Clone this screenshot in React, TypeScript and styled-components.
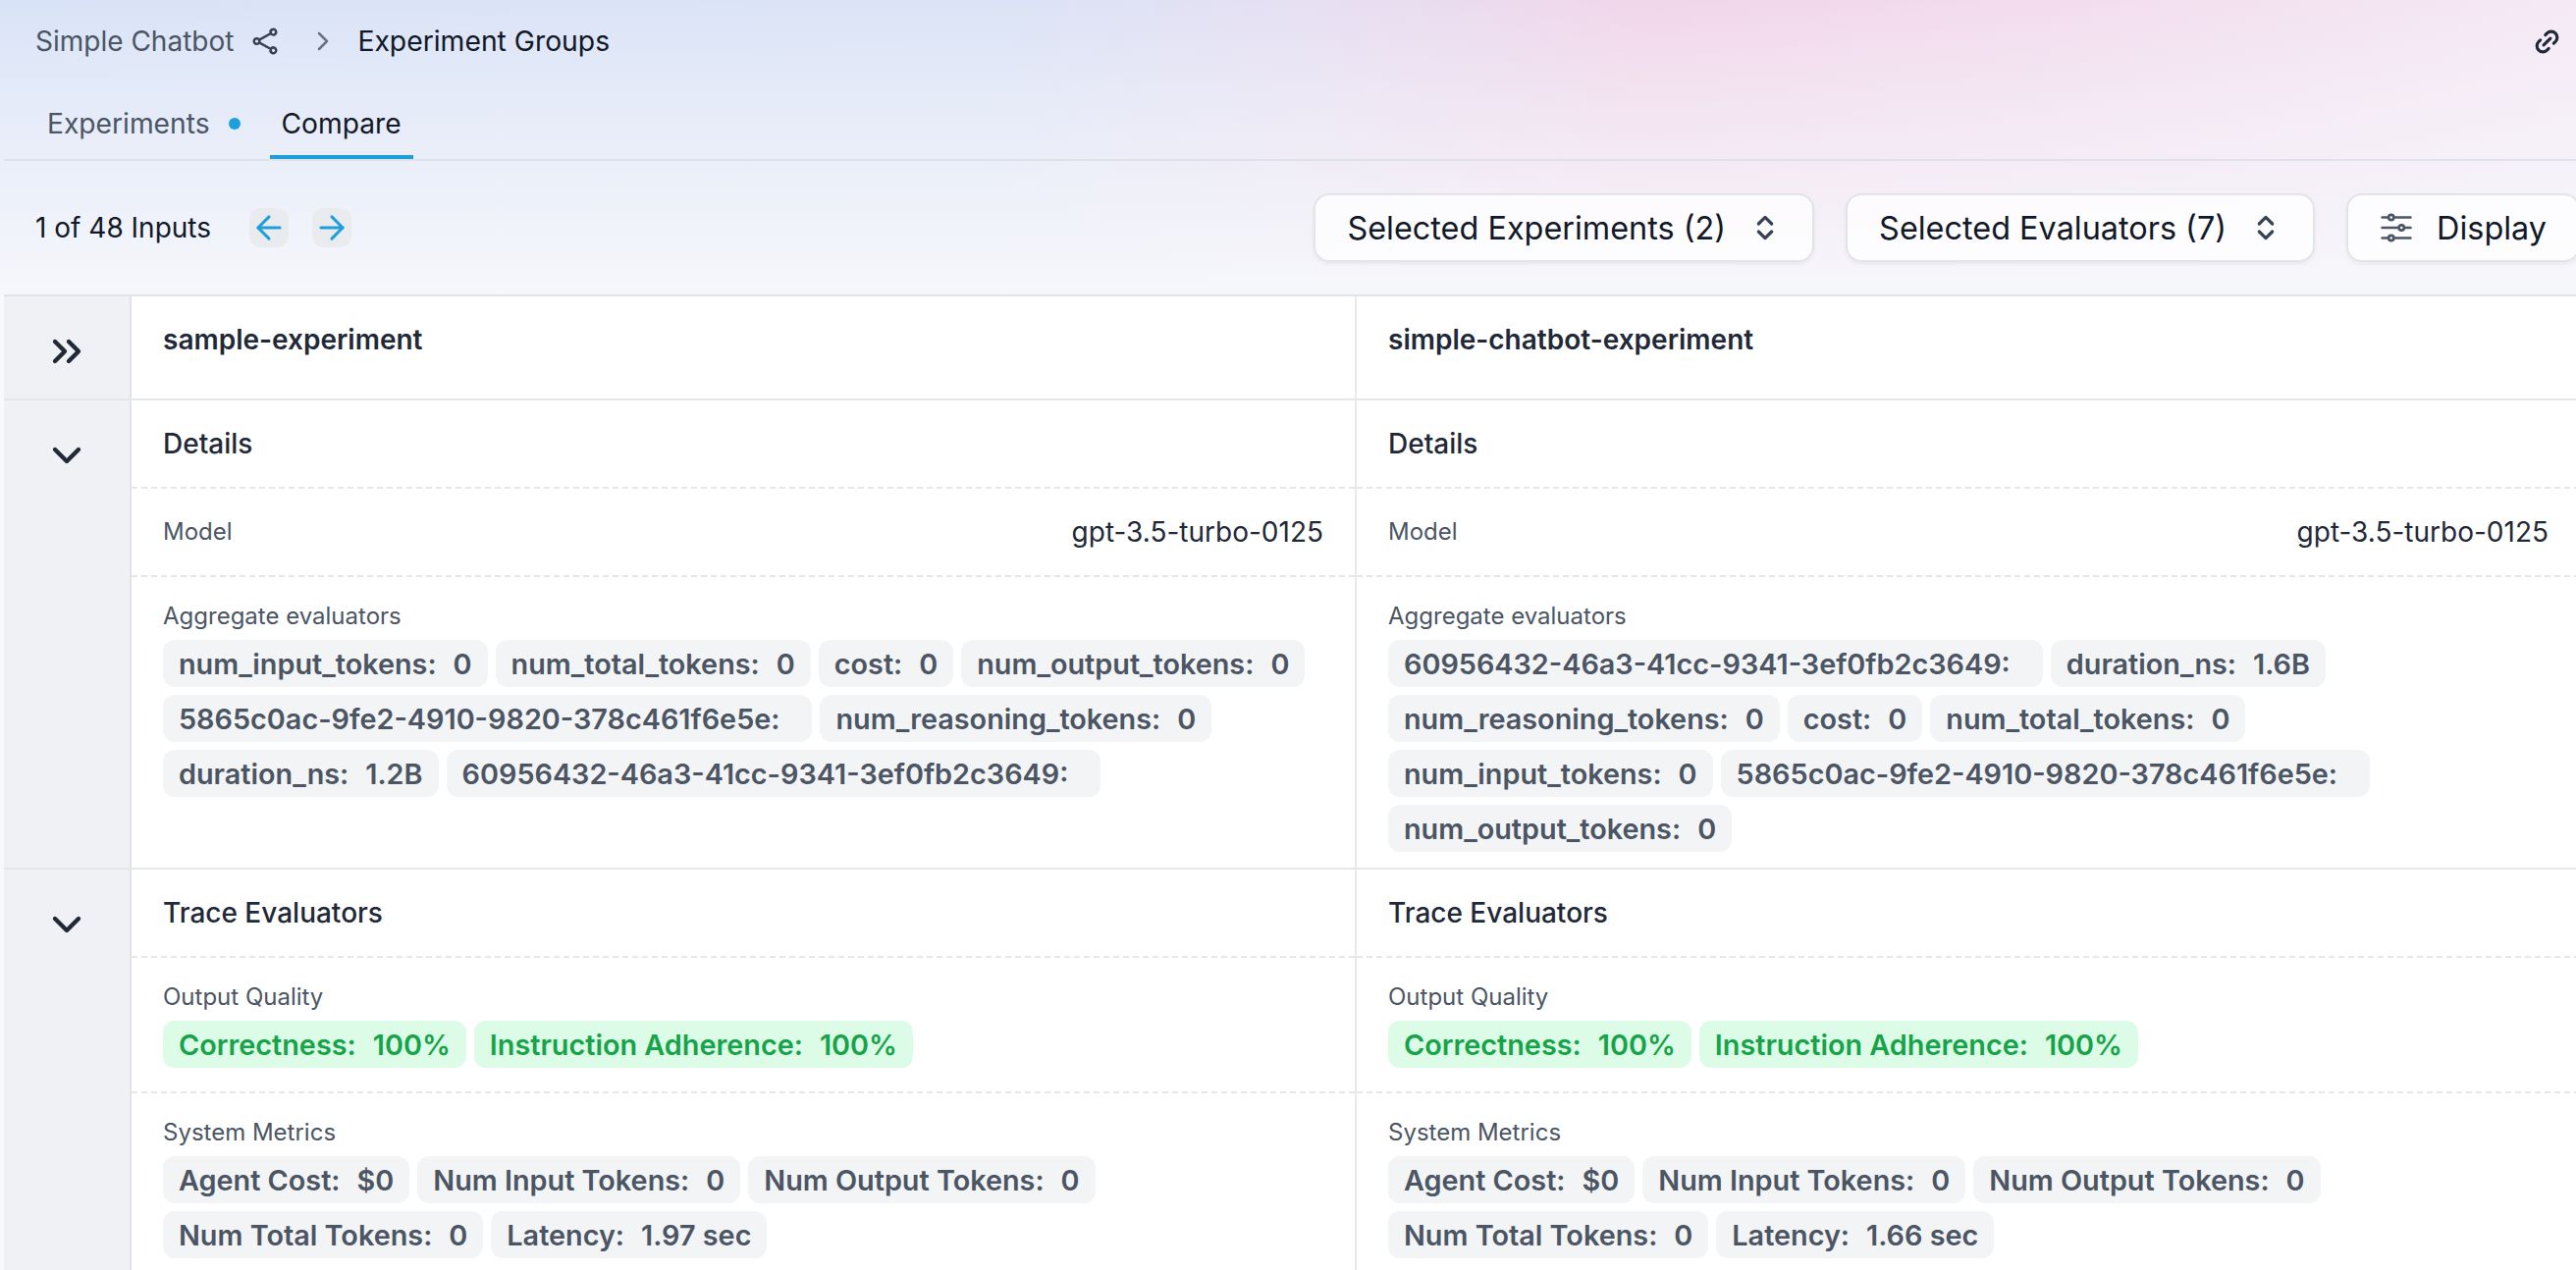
import React from "react";
import styled, { createGlobalStyle } from "styled-components";
import {
  ArrowLeft,
  ArrowRight,
  ChevronDown,
  ChevronRight,
  ChevronsRight,
  ChevronsUpDown,
  Link2,
} from "lucide-react";
import { HiOutlineAdjustmentsHorizontal, HiOutlineShare } from "react-icons/hi2";

const Global = createGlobalStyle`
  html, body { margin: 0; padding: 0; height: 100%; overflow: hidden; background: #f8f9fc; }
  #root { height: 100%; }
  * { box-sizing: border-box; }
`;

const Page = styled.div`
  height: 100vh;
  overflow: hidden;
  padding-left: 4px;
  font-family: Inter, "Liberation Sans", sans-serif;
  color: #111827;
  background:
    linear-gradient(to bottom, rgba(246, 247, 251, 0) 0, rgba(246, 247, 251, 0.35) 90px, rgba(246, 247, 251, 1) 300px, #f8f9fc 301px),
    linear-gradient(100deg, #d9e3f7 0, #dbe3f6 36%, #e6dff2 47%, #f1d6ea 59%, #f2dcee 73%, #f5e9f5 92%, #f5edf7 100%);
`;

const Breadcrumb = styled.div`
  height: 84px;
  display: flex;
  align-items: center;
  padding: 0 15px 0 32px;
  font-size: 28px;
`;

const Crumb = styled.span<{ $current?: boolean }>`
  color: ${(p) => (p.$current ? "#111827" : "#4b5563")};
  font-size: ${(p) => (p.$current ? "28.3px" : "28px")};
`;

const ShareIcon = styled(HiOutlineShare)`
  width: 30px;
  height: 30px;
  margin-left: 17px;
  color: #374151;
`;

const Separator = styled(ChevronRight)`
  width: 32px;
  height: 32px;
  margin: 0 19px 0 28px;
  color: #6b7280;
`;

const LinkIcon = styled(Link2)`
  width: 29px;
  height: 29px;
  margin-left: auto;
  color: #1f2937;
  transform: rotate(-45deg);
`;

const Tabs = styled.div`
  height: 80px;
  display: flex;
  align-items: flex-end;
  gap: 18px;
  padding-left: 32px;
  border-bottom: 2px solid #dfe2e8;
`;

const Tab = styled.div<{ $active?: boolean }>`
  height: 78px;
  display: flex;
  align-items: center;
  gap: 19px;
  padding: 9px 12px 0;
  font-size: 28.2px;
  color: ${(p) => (p.$active ? "#111827" : "#4b5563")};
  border-bottom: 4px solid ${(p) => (p.$active ? "#1e9fdb" : "transparent")};
`;

const Dot = styled.span`
  width: 12px;
  height: 12px;
  border-radius: 50%;
  background: #1e9fdb;
`;

const Toolbar = styled.div`
  height: 136px;
  width: 2624px;
  display: flex;
  align-items: center;
  padding-left: 32px;
`;

const Count = styled.span`
  font-size: 28px;
  color: #111827;
  margin-right: 39px;
`;

const NavButton = styled.div`
  width: 40px;
  height: 40px;
  flex: none;
  display: flex;
  align-items: center;
  justify-content: center;
  margin-right: 24px;
  border-radius: 12px;
  background: #e9ebef;
  color: #1e9fdb;
`;

const NavActions = styled.div`
  margin-left: auto;
  display: flex;
  gap: 32px;
`;

const SelectButton = styled.div`
  height: 70px;
  display: flex;
  align-items: center;
  padding: 0 32px;
  gap: 24px;
  font-size: 32.4px;
  color: #111827;
  background: rgba(255, 255, 255, 0.75);
  border: 2px solid #e2e4e9;
  border-radius: 16px;
  box-shadow: 0 2px 4px rgba(17, 24, 39, 0.06);
`;

const UpDown = styled(ChevronsUpDown)`
  width: 32px;
  height: 32px;
  color: #374151;
`;

const Sliders = styled(HiOutlineAdjustmentsHorizontal)`
  width: 42px;
  height: 42px;
  margin-left: -4px;
  margin-right: -4px;
  color: #4b5563;
`;

const Row = styled.div<{ $top?: boolean }>`
  display: grid;
  grid-template-columns: 130px 1248px 1248px;
  background: #fff;
  border-top: ${(p) => (p.$top ? "2px solid #e1e3e9" : "0")};
  border-bottom: 2px solid #e5e7eb;
`;

const Gutter = styled.div`
  display: flex;
  justify-content: center;
  align-items: flex-start;
  padding: 32px 0 0 0;
  background: #f0f1f5;
  border-right: 2px solid #e1e3e9;
  color: #1f2937;
`;

const Column = styled.div<{ $height?: number }>`
  display: flex;
  flex-direction: column;
  min-width: 0;
  border-right: 2px solid #e9eaee;
  min-height: ${(p) => (p.$height ? `${p.$height}px` : "0")};
`;

const ColumnTitle = styled.div`
  padding: 24px 32px;
  font-size: 28px;
  line-height: 40px;
  font-weight: 600;
  color: #1f2937;
`;

const SectionTitle = styled.div`
  height: 90px;
  padding: 24px 32px;
  font-size: 28px;
  line-height: 40px;
  font-weight: 500;
  color: #1f2937;
  border-bottom: 2px dashed #e5e7eb;
`;

const Field = styled.div<{ $last?: boolean; $inline?: boolean }>`
  padding: ${(p) => (p.$inline ? "23px" : "24px")} 32px ${(p) => (p.$last ? "16px" : p.$inline ? "23px" : "24px")};
  border-bottom: ${(p) => (p.$last ? "0" : "2px dashed #e5e7eb")};
  flex: ${(p) => (p.$last ? 1 : "none")};
`;

const Inline = styled.div`
  height: 42px;
  display: flex;
  justify-content: space-between;
  align-items: center;
`;

const FieldLabel = styled.div`
  font-size: 24px;
  line-height: 32px;
  color: #4b5563;
`;

const Value = styled.span`
  font-size: 28px;
  color: #1f2937;
`;

const Chips = styled.div`
  display: flex;
  flex-wrap: wrap;
  gap: 8px;
  margin-top: 8px;
`;

const ChipBox = styled.div<{ $good?: boolean }>`
  height: 48px;
  display: flex;
  align-items: center;
  gap: 17px;
  padding: 0 16px;
  border-radius: 12px;
  font-size: 28.8px;
  font-weight: 600;
  white-space: nowrap;
  background: ${(p) => (p.$good ? "#dcfce7" : "#f3f4f6")};
  color: ${(p) => (p.$good ? "#16a34a" : "#4b5563")};
`;

type ChipData = [string, string];

const Chip = ({ data, good }: { data: ChipData; good?: boolean }) => (
  <ChipBox $good={good}>
    <span>{data[0]}:</span>
    <span>{data[1]}</span>
  </ChipBox>
);

const ChipField = ({ label, chips, good, last }: { label: string; chips: ChipData[]; good?: boolean; last?: boolean }) => (
  <Field $last={last}>
    <FieldLabel>{label}</FieldLabel>
    <Chips>
      {chips.map((c) => (
        <Chip key={c[0]} data={c} good={good} />
      ))}
    </Chips>
  </Field>
);

const columns: {
  name: string;
  aggregate: ChipData[];
  latency: string;
}[] = [
  {
    name: "sample-experiment",
    aggregate: [
      ["num_input_tokens", "0"],
      ["num_total_tokens", "0"],
      ["cost", "0"],
      ["num_output_tokens", "0"],
      ["5865c0ac-9fe2-4910-9820-378c461f6e5e", ""],
      ["num_reasoning_tokens", "0"],
      ["duration_ns", "1.2B"],
      ["60956432-46a3-41cc-9341-3ef0fb2c3649", ""],
    ],
    latency: "1.97 sec",
  },
  {
    name: "simple-chatbot-experiment",
    aggregate: [
      ["60956432-46a3-41cc-9341-3ef0fb2c3649", ""],
      ["duration_ns", "1.6B"],
      ["num_reasoning_tokens", "0"],
      ["cost", "0"],
      ["num_total_tokens", "0"],
      ["num_input_tokens", "0"],
      ["5865c0ac-9fe2-4910-9820-378c461f6e5e", ""],
      ["num_output_tokens", "0"],
    ],
    latency: "1.66 sec",
  },
];

const quality: ChipData[] = [
  ["Correctness", "100%"],
  ["Instruction Adherence", "100%"],
];

export default function App() {
  return (
    <Page>
      <Global />
      <Breadcrumb>
        <Crumb>Simple Chatbot</Crumb>
        <ShareIcon strokeWidth={2} />
        <Separator strokeWidth={1.9} />
        <Crumb $current>Experiment Groups</Crumb>
        <LinkIcon strokeWidth={2.6} />
      </Breadcrumb>
      <Tabs>
        <Tab>
          Experiments
          <Dot />
        </Tab>
        <Tab $active>Compare</Tab>
      </Tabs>
      <Toolbar>
        <Count>1 of 48 Inputs</Count>
        <NavButton>
          <ArrowLeft size={38} strokeWidth={1.9} />
        </NavButton>
        <NavButton>
          <ArrowRight size={38} strokeWidth={1.9} />
        </NavButton>
        <NavActions>
          <SelectButton>
            Selected Experiments (2)
            <UpDown strokeWidth={2.4} />
          </SelectButton>
          <SelectButton>
            Selected Evaluators (7)
            <UpDown strokeWidth={2.4} />
          </SelectButton>
          <SelectButton>
            <Sliders strokeWidth={1.5} />
            Display
          </SelectButton>
        </NavActions>
      </Toolbar>

      <Row $top>
        <Gutter>
          <ChevronsRight size={48} strokeWidth={2.2} />
        </Gutter>
        {columns.map((c) => (
          <Column key={c.name} $height={104}>
            <ColumnTitle>{c.name}</ColumnTitle>
          </Column>
        ))}
      </Row>

      <Row>
        <Gutter>
          <ChevronDown size={48} strokeWidth={2.2} />
        </Gutter>
        {columns.map((c) => (
          <Column key={c.name}>
            <SectionTitle>Details</SectionTitle>
            <Field $inline>
              <Inline>
                <FieldLabel>Model</FieldLabel>
                <Value>gpt-3.5-turbo-0125</Value>
              </Inline>
            </Field>
            <ChipField label="Aggregate evaluators" chips={c.aggregate} last />
          </Column>
        ))}
      </Row>

      <Row>
        <Gutter>
          <ChevronDown size={48} strokeWidth={2.2} />
        </Gutter>
        {columns.map((c) => (
          <Column key={c.name}>
            <SectionTitle>Trace Evaluators</SectionTitle>
            <ChipField label="Output Quality" chips={quality} good />
            <ChipField
              label="System Metrics"
              chips={[
                ["Agent Cost", "$0"],
                ["Num Input Tokens", "0"],
                ["Num Output Tokens", "0"],
                ["Num Total Tokens", "0"],
                ["Latency", c.latency],
              ]}
              last
            />
          </Column>
        ))}
      </Row>
    </Page>
  );
}
